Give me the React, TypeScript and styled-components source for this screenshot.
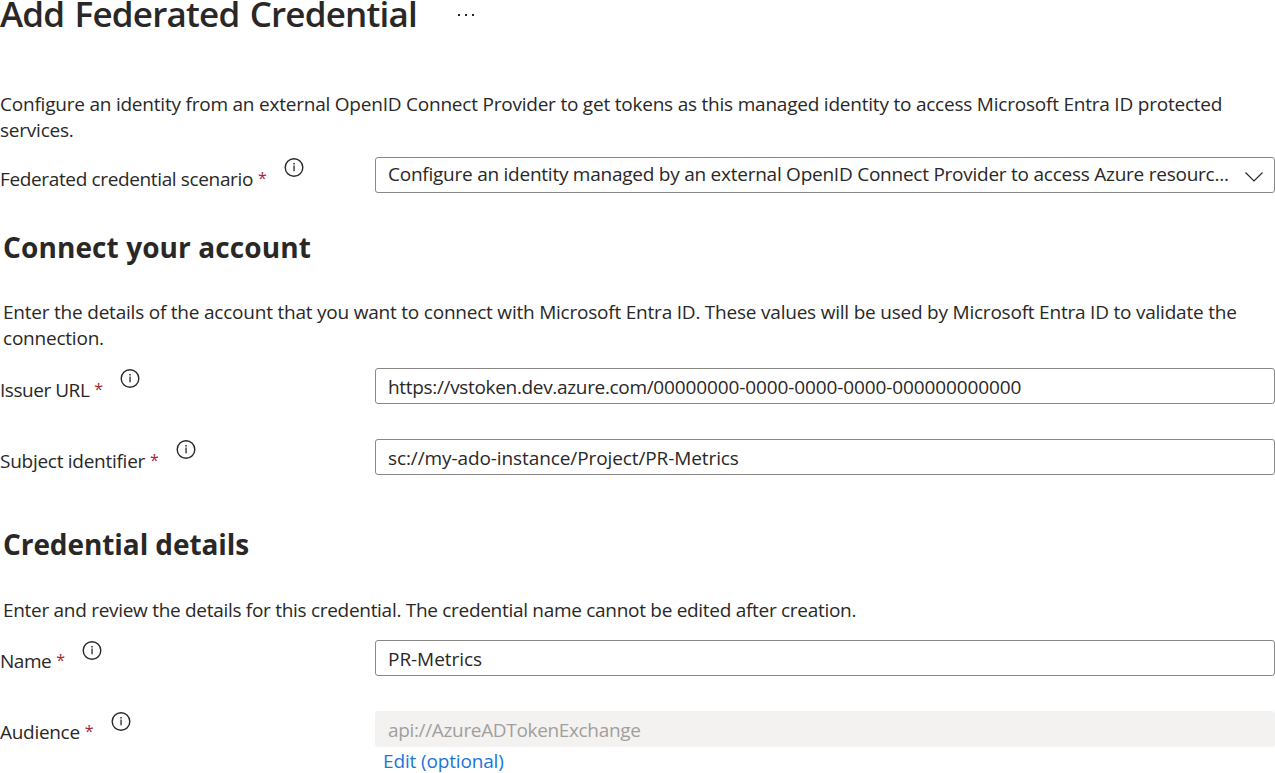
import React from "react";
import styled, { createGlobalStyle } from "styled-components";

const GlobalStyle = createGlobalStyle`
  * { box-sizing: border-box; }
  body {
    margin: 0;
    background: #fff;
    color: #292827;
    font-family: "Segoe UI", "Open Sans", sans-serif;
    font-size: 19px;
    overflow: hidden;
  }
`;

const Page = styled.main`
  width: 1275px;
  height: 773px;
  overflow: hidden;
  display: flex;
  flex-direction: column;
`;

const TitleBar = styled.header`
  display: flex;
  height: 28px;
  flex: none;
  gap: 40px;
`;

const Title = styled.h1`
  margin: 0;
  font-size: 35px;
  line-height: 28px;
  font-weight: 600;
  white-space: nowrap;
  letter-spacing: -0.8px;
  word-spacing: 2px;
`;

const MoreIcon = styled.svg`
  width: 18px;
  height: 28px;
  fill: #292827;
`;

const Paragraph = styled.p<{ $top: number; $indent?: number; $spacing?: number }>`
  margin: ${(p) => p.$top}px 0 0 ${(p) => p.$indent ?? 0}px;
  line-height: 26px;
  white-space: nowrap;
  letter-spacing: ${(p) => p.$spacing ?? 0}px;
`;

const SectionTitle = styled.h2<{ $top: number; $spacing?: number }>`
  margin: ${(p) => p.$top}px 0 0 3px;
  font-size: 28px;
  line-height: 36px;
  font-weight: 700;
  letter-spacing: ${(p) => p.$spacing ?? 0}px;
`;

const Row = styled.div<{ $top: number }>`
  display: grid;
  grid-template-columns: 375px 900px;
  height: 36px;
  flex: none;
  margin-top: ${(p) => p.$top}px;
`;

const Label = styled.label<{ $spacing: number }>`
  display: flex;
  align-items: flex-start;
  line-height: 26px;
  white-space: nowrap;
  letter-spacing: ${(p) => p.$spacing}px;
`;

const LabelText = styled.span<{ $drop: number }>`
  padding-top: ${(p) => p.$drop}px;
`;

const Required = styled.span<{ $drop: number }>`
  padding: ${(p) => p.$drop}px 0 0 5px;
  width: 31px;
  font-size: 16px;
  color: #a4262c;
`;

const InfoSvg = styled.svg`
  width: 20px;
  height: 20px;
  flex: none;
`;

const Field = styled.div<{ $disabled?: boolean; $spacing?: number }>`
  display: flex;
  justify-content: space-between;
  height: 36px;
  border: 1px solid ${(p) => (p.$disabled ? "#f3f2f1" : "#8a8886")};
  border-radius: 3px;
  padding: 0 11px 0 12px;
  line-height: 36px;
  white-space: nowrap;
  background: ${(p) => (p.$disabled ? "#f3f2f1" : "#fff")};
  color: ${(p) => (p.$disabled ? "#a19f9d" : "#292827")};
  letter-spacing: ${(p) => p.$spacing ?? 0}px;
`;

const SelectText = styled.span`
  line-height: 32px;
`;

const UrlText = styled.span`
  letter-spacing: -0.33px;
`;

const TenantId = styled.span`
  letter-spacing: -0.12px;
`;

const Chevron = styled.svg`
  width: 18px;
  height: 34px;
  flex: none;
  fill: none;
  stroke: #292827;
  stroke-width: 1.2;
`;

const EditLink = styled.a`
  align-self: flex-start;
  margin: 1px 0 0 383px;
  line-height: 26px;
  color: #2175d9;
  text-decoration: none;
  letter-spacing: -0.15px;
`;

const InfoIcon = () => (
  <InfoSvg viewBox="0 0 20 20">
    <circle cx="10" cy="10.500" r="8.800" fill="none" stroke="#292827" strokeWidth="1.4" />
    <path d="M9.400 8.500h1.300v5.700H9.400zM9.300 5.900h1.500v1.500H9.300z" fill="#292827" />
  </InfoSvg>
);

const FieldLabel = ({ text, spacing = -0.3, drop = 9 }: { text: string; spacing?: number; drop?: number }) => (
  <Label $spacing={spacing}>
    <LabelText $drop={drop}>{text}</LabelText>
    <Required $drop={drop - 1}>*</Required>
    <InfoIcon />
  </Label>
);

export default function App() {
  return (
    <>
      <GlobalStyle />
      <Page>
        <TitleBar>
          <Title>Add Federated Credential</Title>
          <MoreIcon viewBox="0 0 18 28">
            <path d="M1 14h2v2H1zM8 14h2v2H8zM15 14h2v2h-2z" />
          </MoreIcon>
        </TitleBar>
        <Paragraph $top={63} $spacing={-0.218}>
          Configure an identity from an external OpenID Connect Provider to get tokens as this managed identity to access Microsoft Entra ID protected
          <br />
          services.
        </Paragraph>
        <Row $top={14}>
          <FieldLabel text="Federated credential scenario" spacing={-0.36} />
          <Field $spacing={-0.245}>
            <SelectText>Configure an identity managed by an external OpenID Connect Provider to access Azure resourc...</SelectText>
            <Chevron viewBox="0 0 18 34">
              <path d="M0.5 14.5 9 23l8.500-8.500" />
            </Chevron>
          </Field>
        </Row>
        <SectionTitle $top={36} $spacing={0.1}>Connect your account</SectionTitle>
        <Paragraph $top={34} $indent={3} $spacing={-0.216}>
          Enter the details of the account that you want to connect with Microsoft Entra ID. These values will be used by Microsoft Entra ID to validate the
          <br />
          connection.
        </Paragraph>
        <Row $top={17}>
          <FieldLabel text="Issuer URL" spacing={-0.46} />
          <Field>
            <UrlText>
              https://vstoken.dev.azure.com/<TenantId>00000000-0000-0000-0000-000000000000</TenantId>
            </UrlText>
          </Field>
        </Row>
        <Row $top={35}>
          <FieldLabel text="Subject identifier" spacing={-0.27} />
          <Field $spacing={-0.1}>sc://my-ado-instance/Project/PR-Metrics</Field>
        </Row>
        <SectionTitle $top={51} $spacing={-0.08}>Credential details</SectionTitle>
        <Paragraph $top={35} $indent={3} $spacing={-0.295}>
          Enter and review the details for this credential. The credential name cannot be edited after creation.
        </Paragraph>
        <Row $top={17}>
          <FieldLabel text="Name" spacing={-0.45} drop={8} />
          <Field $spacing={-0.05}>PR-Metrics</Field>
        </Row>
        <Row $top={35}>
          <FieldLabel text="Audience" drop={8} />
          <Field $disabled $spacing={-0.34}>api://AzureADTokenExchange</Field>
        </Row>
        <EditLink>Edit (optional)</EditLink>
      </Page>
    </>
  );
}
